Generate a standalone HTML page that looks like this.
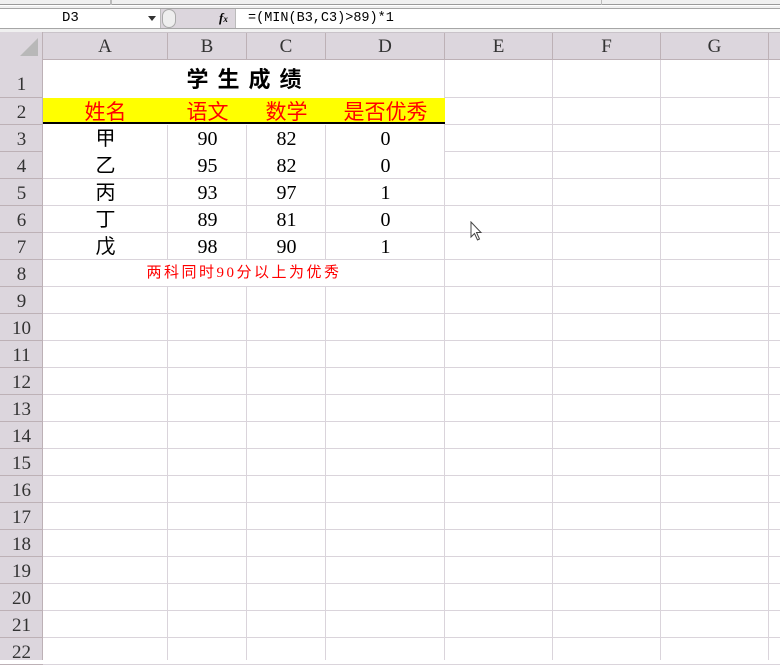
<!DOCTYPE html>
<html><head><meta charset="utf-8"><style>
*{margin:0;padding:0;box-sizing:border-box}
body{width:780px;height:660px;overflow:hidden;background:#fff;position:relative;font-family:"Liberation Serif","Noto Serif CJK SC",serif}
.a{position:absolute}
.hl{position:absolute;height:1px;background:#dad4db}
.vl{position:absolute;width:1px;background:#dad4db}
.ch{position:absolute;top:33px;height:26px;text-align:center;line-height:28px;font-size:19px;color:#333;border-right:1px solid #bdb1b6}
.rh{position:absolute;left:0;width:43px;text-align:center;font-size:19px;color:#333;border-bottom:1px solid #bdb1b6}
.c{position:absolute;text-align:center;font-size:20px;color:#000;height:27px;line-height:29px}
.cj{font-family:"Liberation Serif","Noto Sans CJK SC",sans-serif}
</style></head><body>
<div class="a" style="left:0;top:0;width:780px;height:5px;background:#f0f0f0;border-bottom:1px solid #9a9a9a"></div>
<div class="a" style="left:110px;top:0;width:1px;height:5px;background:#bbb"></div>
<div class="a" style="left:111px;top:0;width:1px;height:5px;background:#bbb"></div>
<div class="a" style="left:601px;top:0;width:1px;height:5px;background:#bbb"></div>
<div class="a" style="left:0;top:6px;width:780px;height:26px;background:#f0f0f0"></div>
<div class="a" style="left:0;top:8px;width:780px;height:21px;background:#fff;border-top:1px solid #a6a6a6;border-bottom:1px solid #a6a6a6"></div>
<div class="a" style="left:160px;top:9px;width:76px;height:19px;background:#dcd6dd;border-left:1px solid #bbb;border-right:1px solid #bbb"></div>
<div class="a" style="left:162px;top:9px;width:14px;height:19px;border-radius:10px;border:1px solid #aaa;background:#eee"></div>
<div class="a" style="left:148px;top:16px;width:0;height:0;border-left:4px solid transparent;border-right:4px solid transparent;border-top:5px solid #333"></div>
<div class="a" style="left:62px;top:9px;font-family:'Liberation Mono',monospace;font-size:14px;line-height:19px">D3</div>
<div class="a" style="left:219px;top:9px;font-style:italic;font-weight:bold;font-size:13px;line-height:18px">f<span style="font-size:9px">x</span></div>
<div class="a" style="left:248px;top:9px;font-family:'Liberation Mono',monospace;font-size:13.5px;line-height:19px">=(MIN(B3,C3)&gt;89)*1</div>

<div class="a" style="left:0;top:32px;width:780px;height:28px;background:#dcd6dd;border-top:1px solid #c9c3c9;border-bottom:1px solid #bdb1b6"></div>
<div class="a" style="left:0;top:32px;width:43px;height:628px;background:#dcd6dd;border-right:1px solid #bdb1b6"></div>
<div class="a" style="left:20px;top:38px;width:0;height:0;border-left:18px solid transparent;border-bottom:18px solid #b8b8b8"></div>

<div class="ch" style="left:43px;width:125px">A</div>
<div class="ch" style="left:168px;width:79px">B</div>
<div class="ch" style="left:247px;width:79px">C</div>
<div class="ch" style="left:326px;width:119px">D</div>
<div class="ch" style="left:445px;width:108px">E</div>
<div class="ch" style="left:553px;width:108px">F</div>
<div class="ch" style="left:661px;width:108px">G</div>
<div class="ch" style="left:769px;width:20px"></div>

<div class="vl" style="left:167px;top:125px;height:135px"></div>
<div class="vl" style="left:246px;top:125px;height:135px"></div>
<div class="vl" style="left:325px;top:125px;height:135px"></div>
<div class="vl" style="left:167px;top:287px;height:373px"></div>
<div class="vl" style="left:246px;top:287px;height:373px"></div>
<div class="vl" style="left:325px;top:287px;height:373px"></div>
<div class="vl" style="left:444px;top:60px;height:600px"></div>
<div class="vl" style="left:552px;top:60px;height:600px"></div>
<div class="vl" style="left:660px;top:60px;height:600px"></div>
<div class="vl" style="left:768px;top:60px;height:600px"></div>

<div class="rh" style="top:60px;height:38px;line-height:50px">1</div>
<div class="rh" style="top:98px;height:27px;line-height:29px">2</div>
<div id="rows"></div>
<script>
var h='';
for(var n=3;n<=22;n++){var t=125+(n-3)*27;
h+='<div class="rh" style="top:'+t+'px;height:27px;line-height:29px">'+n+'</div>';
h+='<div class="hl" style="left:'+(n==3?445:43)+'px;top:'+(t+26)+'px;width:737px"></div>';}
h+='<div class="hl" style="left:445px;top:97px;width:335px"></div><div class="hl" style="left:445px;top:124px;width:335px"></div>';
document.getElementById('rows').outerHTML=h;
</script>
<div class="a" style="left:43px;top:98px;width:402px;height:26px;background:#ffff00;border-bottom:2px solid #000"></div>
<div class="a cj" style="left:43px;top:62px;width:402px;text-align:center;font-size:22px;font-weight:bold;letter-spacing:9px;padding-left:9px;line-height:36px">学生成绩</div>
<div class="c cj" style="left:43px;top:98px;width:125px;color:#f00;font-size:21px">姓名</div>
<div class="c cj" style="left:168px;top:98px;width:79px;color:#f00;font-size:21px">语文</div>
<div class="c cj" style="left:247px;top:98px;width:79px;color:#f00;font-size:21px">数学</div>
<div class="c cj" style="left:326px;top:98px;width:119px;color:#f00;font-size:21px">是否优秀</div>

<div class="c cj" style="left:43px;top:125px;width:125px">甲</div><div class="c" style="left:168px;top:125px;width:79px">90</div><div class="c" style="left:247px;top:125px;width:79px">82</div><div class="c" style="left:326px;top:125px;width:119px">0</div>
<div class="c cj" style="left:43px;top:152px;width:125px">乙</div><div class="c" style="left:168px;top:152px;width:79px">95</div><div class="c" style="left:247px;top:152px;width:79px">82</div><div class="c" style="left:326px;top:152px;width:119px">0</div>
<div class="c cj" style="left:43px;top:179px;width:125px">丙</div><div class="c" style="left:168px;top:179px;width:79px">93</div><div class="c" style="left:247px;top:179px;width:79px">97</div><div class="c" style="left:326px;top:179px;width:119px">1</div>
<div class="c cj" style="left:43px;top:206px;width:125px">丁</div><div class="c" style="left:168px;top:206px;width:79px">89</div><div class="c" style="left:247px;top:206px;width:79px">81</div><div class="c" style="left:326px;top:206px;width:119px">0</div>
<div class="c cj" style="left:43px;top:233px;width:125px">戊</div><div class="c" style="left:168px;top:233px;width:79px">98</div><div class="c" style="left:247px;top:233px;width:79px">90</div><div class="c" style="left:326px;top:233px;width:119px">1</div>
<div class="a cj" style="left:43px;top:262px;width:402px;text-align:center;font-size:15px;color:#f00;line-height:22px;letter-spacing:2.5px">两科同时90分以上为优秀</div>

<svg class="a" style="left:470px;top:221px" width="14" height="22" viewBox="0 0 14 22"><path d="M1 1 L1 16 L4.5 12.5 L7.5 19 L9.5 18 L6.5 11.5 L11 11.5 Z" fill="#fff" stroke="#444" stroke-width="1"/></svg>
</body></html>
